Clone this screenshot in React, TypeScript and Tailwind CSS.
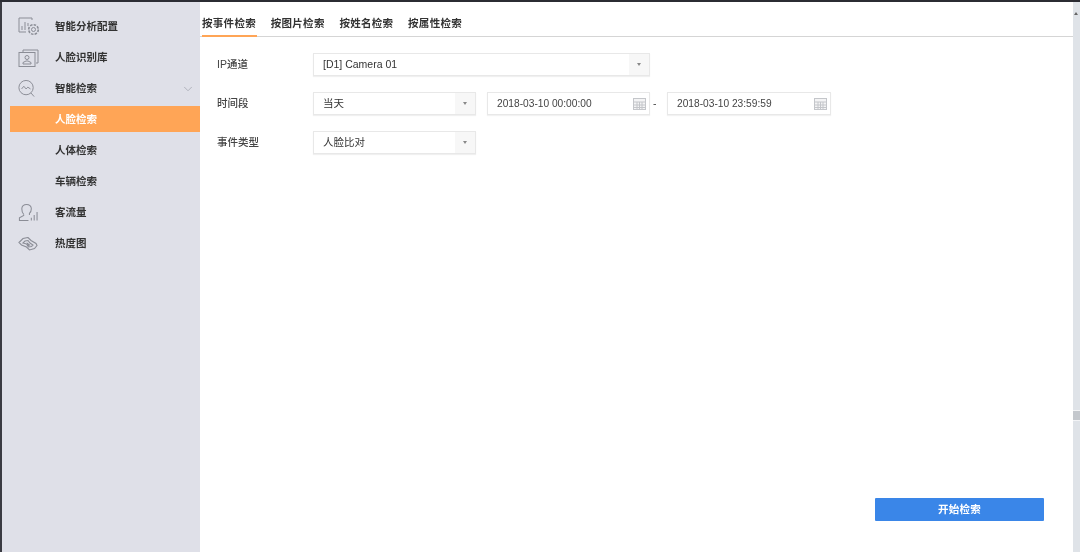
import { ChevronDown } from 'lucide-react'

const cjk = "font-['Liberation_Sans','Noto_Sans_CJK_SC',sans-serif]"

function ChartGearIcon() {
  return (
    <svg width="22" height="19" viewBox="0 0 22 19" fill="none" stroke="#8b8d96" strokeWidth="1">
      <path d="M14 3V1H1v14h7" />
      <path d="M4 13V9M7 13V5M10 9V6" />
      <circle cx="15.500" cy="12.500" r="2" />
      <circle cx="15.500" cy="12.500" r="4.800" strokeDasharray="2.500 1.200" strokeWidth="1.600" />
    </svg>
  )
}

function FaceLibIcon() {
  return (
    <svg width="21" height="18" viewBox="0 0 21 18" fill="none" stroke="#8b8d96" strokeWidth="1">
      <path d="M5 3V1h15v13h-2" />
      <rect x="1" y="3.500" width="16" height="14" />
      <circle cx="9" cy="8.500" r="2" />
      <path d="M5 15v-1.500l3-1.500h2l3 1.500V15z" />
    </svg>
  )
}

function SearchChartIcon() {
  return (
    <svg width="17" height="17" viewBox="0 0 19 19" fill="none" stroke="#8b8d96" strokeWidth="1.100">
      <circle cx="9" cy="8.500" r="8" />
      <path d="M4 10l2.500-3 2.500 3 2-2 3 2" />
      <path d="M14.500 14.500l3.500 4" />
    </svg>
  )
}

function PeopleIcon() {
  return (
    <svg width="20" height="19" viewBox="0 0 21 19" fill="none" stroke="#8b8d96" strokeWidth="1.100">
      <path d="M6 11.500C4 9.500 4 7.500 4 5.500 4 3 6 1 9 1s5 2 5 4.500c0 2-.5 3.500-2 5v1.500" />
      <path d="M6 11.500v1L1.500 15v3H11" />
      <path d="M14 18v-3M17 18v-6M20 18V9" />
    </svg>
  )
}

function HeatIcon() {
  return (
    <svg width="20" height="14" viewBox="0 0 20 14" fill="none" stroke="#8b8d96" strokeWidth="1.100">
      <path d="M1 5.500L5 1.500l5-1 3 3 5 3 1 2-2.500 3-5 1.500-3-3-5-2z" />
      <path d="M5 6l2-2 3-.5 2 2.500 3 2-1.500 1.500-3 .5-2-3z" />
      <path d="M9.500 6.500l2 1.500-1.500.5z" />
    </svg>
  )
}

function CalendarIcon() {
  return (
    <svg width="13" height="13" viewBox="0 0 13 13" fill="none" stroke="#c4c6ca" strokeWidth="1">
      <rect x="0.500" y="1.500" width="12" height="11" fill="#f4f4f5" />
      <path d="M0.500 5h12M0.500 8h12M0.500 10.500h12M4 5v7.500M6.500 5v7.500M9 5v7.500" />
    </svg>
  )
}

function Caret() {
  return <span className="w-0 h-0 border-x-[2.500px] border-x-transparent border-t-[3px] border-t-[#888]" />
}

function SideItem({ icon, label, active, arrow }: { icon?: React.ReactNode; label: string; active?: boolean; arrow?: boolean }) {
  return (
    <div className="h-[31px] flex items-center">
      <div className={`flex items-center h-[26px] ml-[10px] flex-1 ${active ? 'bg-[#ffa556] text-white -mt-[2px] pt-[2px]' : 'text-[#333]'}`}>
        <div className="w-[45px] pl-[8px] flex justify-start">{icon}</div>
        <span className="text-[10.500px] font-bold flex-1">{label}</span>
        {arrow && <ChevronDown size={14} strokeWidth={1.300} className="text-[#a3a5ae] mr-[5px]" />}
      </div>
    </div>
  )
}

function SelectBox({ value, width }: { value: string; width: string }) {
  return (
    <div className={`${width} h-[23px] flex items-center bg-white border border-[#e8e8e8] shadow-[0_1px_1px_rgba(0,0,0,0.06)]`}>
      <span className="flex-1 pl-[9px] text-[10.500px] text-[#333]">{value}</span>
      <div className="w-[20px] h-full bg-[#f7f7f7] flex items-center justify-center">
        <Caret />
      </div>
    </div>
  )
}

function DateBox({ value, width }: { value: string; width: string }) {
  return (
    <div className={`${width} h-[23px] flex items-center bg-white border border-[#e8e8e8] shadow-[0_1px_1px_rgba(0,0,0,0.05)] pl-[9px] pr-[3px]`}>
      <span className="flex-1 text-[10.200px] text-[#444]">{value}</span>
      <CalendarIcon />
    </div>
  )
}

function Label({ text }: { text: string }) {
  return <div className="w-[96px] text-[10.500px] font-medium text-[#444]">{text}</div>
}

const tabs = ['按事件检索', '按图片检索', '按姓名检索', '按属性检索']

export default function App() {
  return (
    <div className={`${cjk} w-[1080px] h-[552px] overflow-hidden bg-white flex flex-col blur-[0.3px]`}>
      <div className="h-[2px] bg-[#2b2c33]" />
      <div className="flex-1 flex min-h-0">
        <aside className="w-[200px] bg-[#dfe0e8] border-l-2 border-[#3a3b42] pt-[9px]">
          <div className="-ml-[2px]">
            <SideItem icon={<ChartGearIcon />} label="智能分析配置" />
            <SideItem icon={<FaceLibIcon />} label="人脸识别库" />
            <SideItem icon={<SearchChartIcon />} label="智能检索" arrow />
            <SideItem label="人脸检索" active />
            <SideItem label="人体检索" />
            <SideItem label="车辆检索" />
            <SideItem icon={<PeopleIcon />} label="客流量" />
            <SideItem icon={<HeatIcon />} label="热度图" />
          </div>
        </aside>

        <main className="flex-1 flex flex-col min-w-0">
          <div className="h-[35px] flex items-end border-b border-[#d5d5d5] pl-[2px] gap-[13.700px]">
            {tabs.map((t, i) => (
              <div key={t} className={`w-[55px] h-[27px] pt-[3px] flex items-center whitespace-nowrap text-[10.500px] font-bold tracking-[0.300px] text-[#333] ${i === 0 ? 'border-b-2 border-[#ffa556] -mb-px' : ''}`}>
                {t}
              </div>
            ))}
          </div>

          <div className="pl-[17px] pt-[16px] flex flex-col gap-[16px]">
            <div className="flex items-center">
              <Label text="IP通道" />
              <SelectBox value="[D1] Camera 01" width="w-[337px]" />
            </div>
            <div className="flex items-center">
              <Label text="时间段" />
              <SelectBox value="当天" width="w-[163px]" />
              <div className="ml-[11px]"><DateBox value="2018-03-10 00:00:00" width="w-[163px]" /></div>
              <span className="w-[17px] pl-[3px] text-[10.500px] text-[#444]">-</span>
              <DateBox value="2018-03-10 23:59:59" width="w-[164px]" />
            </div>
            <div className="flex items-center">
              <Label text="事件类型" />
              <SelectBox value="人脸比对" width="w-[163px]" />
            </div>
          </div>

          <div className="mt-auto mb-[31px] flex justify-end pr-[29px]">
            <button className="w-[169px] h-[23px] bg-[#3a86e8] rounded-[1px] text-white text-[10.500px] font-bold tracking-[0.300px]">
              开始检索
            </button>
          </div>
        </main>

        <div className="w-[7px] bg-[#dfe3e8] flex flex-col">
          <div className="mt-[10px] ml-[1px] w-0 h-0 border-x-[2.500px] border-x-transparent border-b-[3px] border-b-[#666]" />
          <div className="mt-[395px] w-full h-[11px] bg-[#c4c8cd] border-y border-[#f3f4f6]" />
        </div>
      </div>
    </div>
  )
}
